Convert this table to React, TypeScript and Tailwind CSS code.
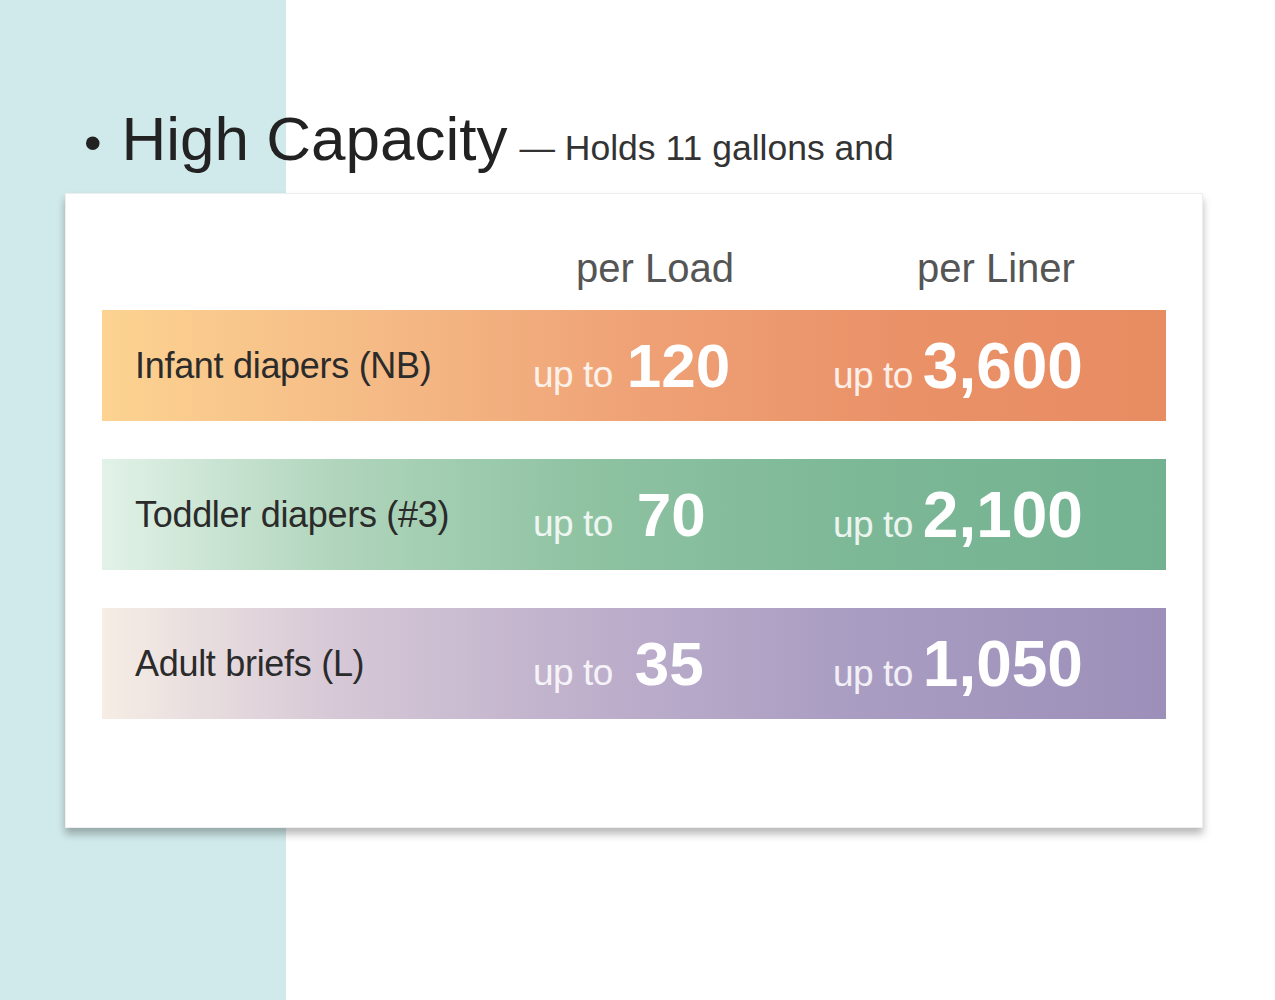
const rows = [
  {
    label: 'Infant diapers (NB)',
    load: '120',
    liner: '3,600',
    loadGap: 'ml-[14px]',
    bg: 'bg-[linear-gradient(to_right,#fcd391_0%,#f5bb86_25%,#efa276_50%,#ea9168_75%,#e88c62_100%)]',
  },
  {
    label: 'Toddler diapers (#3)',
    load: '70',
    liner: '2,100',
    loadGap: 'ml-[24px]',
    bg: 'bg-[linear-gradient(to_right,#e2f2e8_0%,#b0d5bc_22%,#8fc3a2_45%,#7db897_70%,#72b290_100%)]',
  },
  {
    label: 'Adult briefs (L)',
    load: '35',
    liner: '1,050',
    loadGap: 'ml-[22px]',
    bg: 'bg-[linear-gradient(to_right,#f6ede5_0%,#d6c8d6_22%,#bfb0cc_45%,#a99dc2_70%,#9c90ba_100%)]',
  },
]

export default function App() {
  return (
    <div className="w-[1275px] h-[1000px] bg-[linear-gradient(to_right,#d0e9ea_286px,#ffffff_286px)] font-['Liberation_Sans',Arial,sans-serif] pt-[108px]">
      {/* title */}
      <div className="flex items-baseline pl-[84px] leading-none text-[#222]">
        <span className="text-[50px] mr-[20px]">•</span>
        <span className="text-[62px]">High Capacity</span>
        <span className="text-[35.5px] text-[#333] ml-[12px]">— Holds 11 gallons and</span>
      </div>

      {/* capacity table */}
      <div className="ml-[65px] mt-[23px] w-[1138px] h-[635px] bg-white border border-[#eeeeee] shadow-[0_6px_8px_rgba(0,0,0,0.28)] px-[36px] pt-[47px]">
        <div className="grid grid-cols-[431px_300px_1fr] h-[69px] text-[40px] text-[#555] leading-none">
          <div />
          <div className="pl-[43px] pt-[7px]">per Load</div>
          <div className="pl-[84px] pt-[7px]">per Liner</div>
        </div>

        <div className="flex flex-col gap-[38px]">
          {rows.map((r) => (
            <div key={r.label} className={`grid grid-cols-[431px_300px_1fr] items-center h-[111px] ${r.bg}`}>
              <div className="pl-[33px] text-[36px] tracking-[-0.3px] text-[#2b2b2b]">{r.label}</div>
              <div className="flex items-baseline">
                <span className="text-[37px] text-white/85 tracking-[-0.5px]">up to</span>
                <span className={`${r.loadGap} text-[62px] font-bold text-white`}>{r.load}</span>
              </div>
              <div className="flex items-baseline">
                <span className="text-[37px] text-white/85 tracking-[-0.5px]">up to</span>
                <span className="ml-[10px] text-[64px] font-bold text-white">{r.liner}</span>
              </div>
            </div>
          ))}
        </div>
      </div>
    </div>
  )
}
